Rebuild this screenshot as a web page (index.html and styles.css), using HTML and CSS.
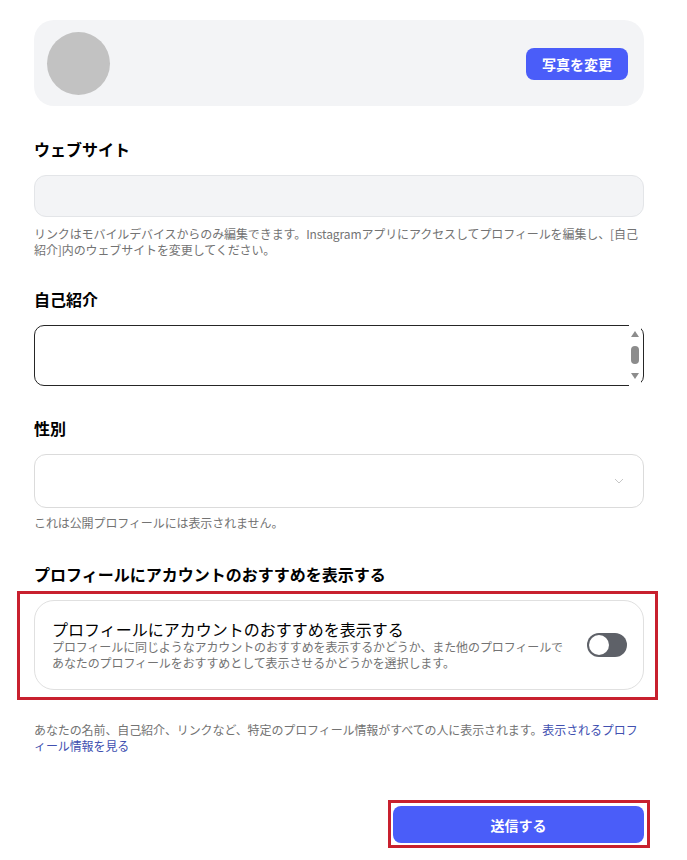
FILE: index.html
```html
<!DOCTYPE html>
<html lang="ja">
<head>
<meta charset="utf-8">
<title>プロフィールを編集</title>
<link rel="stylesheet" href="styles.css">
</head>
<body>
<main class="page">
  <section class="photo-card">
    <div class="avatar"></div>
    <button class="btn-photo" type="button">写真を変更</button>
  </section>

  <h2 class="label label-website">ウェブサイト</h2>
  <div class="input-disabled"></div>
  <p class="help help-website">リンクはモバイルデバイスからのみ編集できます。Instagramアプリにアクセスしてプロフィールを編集し、[自己紹介]内のウェブサイトを変更してください。</p>

  <h2 class="label label-bio">自己紹介</h2>
  <div class="textarea">
    <div class="scrollbar">
      <span class="arrow-up"></span>
      <span class="thumb"></span>
      <span class="arrow-down"></span>
    </div>
  </div>

  <h2 class="label label-gender">性別</h2>
  <div class="select">
    <svg class="chevron" width="10" height="6" viewBox="0 0 10 6"><path d="M1 1 L5 5 L9 1" fill="none" stroke="#c7c7c7" stroke-width="1"/></svg>
  </div>
  <p class="help help-gender">これは公開プロフィールには表示されません。</p>

  <h2 class="label label-suggest">プロフィールにアカウントのおすすめを表示する</h2>
  <div class="highlight highlight-card">
    <div class="toggle-card">
      <div class="toggle-text">
        <div class="toggle-title">プロフィールにアカウントのおすすめを表示する</div>
        <div class="toggle-desc">プロフィールに同じようなアカウントのおすすめを表示するかどうか、また他のプロフィールであなたのプロフィールをおすすめとして表示させるかどうかを選択します。</div>
      </div>
      <div class="switch"><span class="knob"></span></div>
    </div>
  </div>

  <p class="help help-footer">あなたの名前、自己紹介、リンクなど、特定のプロフィール情報がすべての人に表示されます。<a class="link" href="#">表示されるプロフィール情報を見る</a></p>

  <div class="submit-row">
    <div class="highlight highlight-submit">
      <button class="btn-submit" type="button">送信する</button>
    </div>
  </div>
</main>
</body>
</html>
```

FILE: styles.css
```css
* { box-sizing: border-box; }

html, body {
  margin: 0;
  padding: 0;
  background: #ffffff;
}

body {
  font-family: "Noto Sans CJK JP", "Noto Sans", sans-serif;
  color: #000000;
}

.page {
  width: 610px;
  margin-left: 34px;
  padding-top: 20px;
  display: flex;
  flex-direction: column;
}

.photo-card {
  height: 86px;
  background: #f3f4f6;
  border-radius: 20px;
  padding: 12px 16px 11px 13px;
  display: flex;
  align-items: center;
  justify-content: space-between;
}

.avatar {
  width: 63px;
  height: 63px;
  border-radius: 50%;
  background: #c2c2c2;
}

.btn-photo {
  width: 102px;
  height: 32px;
  border: none;
  border-radius: 8px;
  background: #4a5df9;
  color: #ffffff;
  font-family: inherit;
  font-size: 14px;
  font-weight: 700;
  padding: 0;
}

.label {
  margin: 0;
  font-size: 16px;
  font-weight: 700;
  line-height: 24px;
  color: #000000;
}

.label-website { margin-top: 31px; }
.label-bio { margin-top: 29px; }
.label-gender { margin-top: 30px; }
.label-suggest { margin-top: 31px; }

.input-disabled {
  margin-top: 14px;
  height: 42px;
  background: #f3f4f6;
  border: 1px solid #e3e5e8;
  border-radius: 12px;
}

.help {
  margin: 0;
  font-size: 12px;
  line-height: 16px;
  letter-spacing: -0.1px;
  color: #737373;
}

.help-website { margin-top: 9px; }
.help-gender { margin-top: 7px; }
.help-footer { margin-top: 22px; }

.link {
  color: #4150b0;
  text-decoration: none;
}

.textarea {
  position: relative;
  margin-top: 14px;
  height: 61px;
  border: 1px solid #262626;
  border-radius: 10px;
}

.scrollbar {
  position: absolute;
  top: -1px;
  bottom: -1px;
  right: 2px;
  width: 12px;
  background: #ffffff;
  display: flex;
  flex-direction: column;
  align-items: center;
  justify-content: space-between;
  padding: 6px 0 7px;
}

.arrow-up {
  width: 0;
  height: 0;
  border-left: 4px solid transparent;
  border-right: 4px solid transparent;
  border-bottom: 6px solid #8c8c8c;
}

.arrow-down {
  width: 0;
  height: 0;
  border-left: 4px solid transparent;
  border-right: 4px solid transparent;
  border-top: 6px solid #8c8c8c;
}

.thumb {
  width: 8px;
  height: 18px;
  border-radius: 4px;
  background: #8c8c8c;
}

.select {
  margin-top: 14px;
  height: 54px;
  border: 1px solid #dbdbdb;
  border-radius: 12px;
  display: flex;
  align-items: center;
  justify-content: flex-end;
  padding-right: 19px;
}

.highlight {
  border: 3px solid #c8202e;
}

.highlight-card {
  margin: 5px -14px 0 -17px;
  padding: 6px 11px 7px 14px;
}

.toggle-card {
  height: 90px;
  border: 1px solid #e0e0e0;
  border-radius: 20px;
  padding: 0 16px 0 17px;
  display: flex;
  align-items: center;
  gap: 16px;
}

.toggle-text {
  flex: 1;
  display: flex;
  flex-direction: column;
}

.toggle-title {
  font-size: 16px;
  line-height: 20px;
  color: #000000;
}

.toggle-desc {
  font-size: 12px;
  line-height: 16px;
  letter-spacing: -0.1px;
  color: #737373;
}

.switch {
  width: 40px;
  height: 24px;
  border-radius: 12px;
  background: #5e6168;
  padding: 2px;
  display: flex;
  align-items: center;
}

.knob {
  width: 20px;
  height: 20px;
  border-radius: 50%;
  background: #ffffff;
}

.submit-row {
  margin-top: 46px;
  margin-right: -6px;
  display: flex;
  justify-content: flex-end;
}

.highlight-submit {
  width: 262px;
  padding: 3px 3px 2px 2px;
}

.btn-submit {
  display: block;
  width: 100%;
  height: 37px;
  border: none;
  border-radius: 8px;
  background: #4a5df9;
  color: #ffffff;
  font-family: inherit;
  font-size: 14px;
  font-weight: 700;
  padding: 0;
}
```
